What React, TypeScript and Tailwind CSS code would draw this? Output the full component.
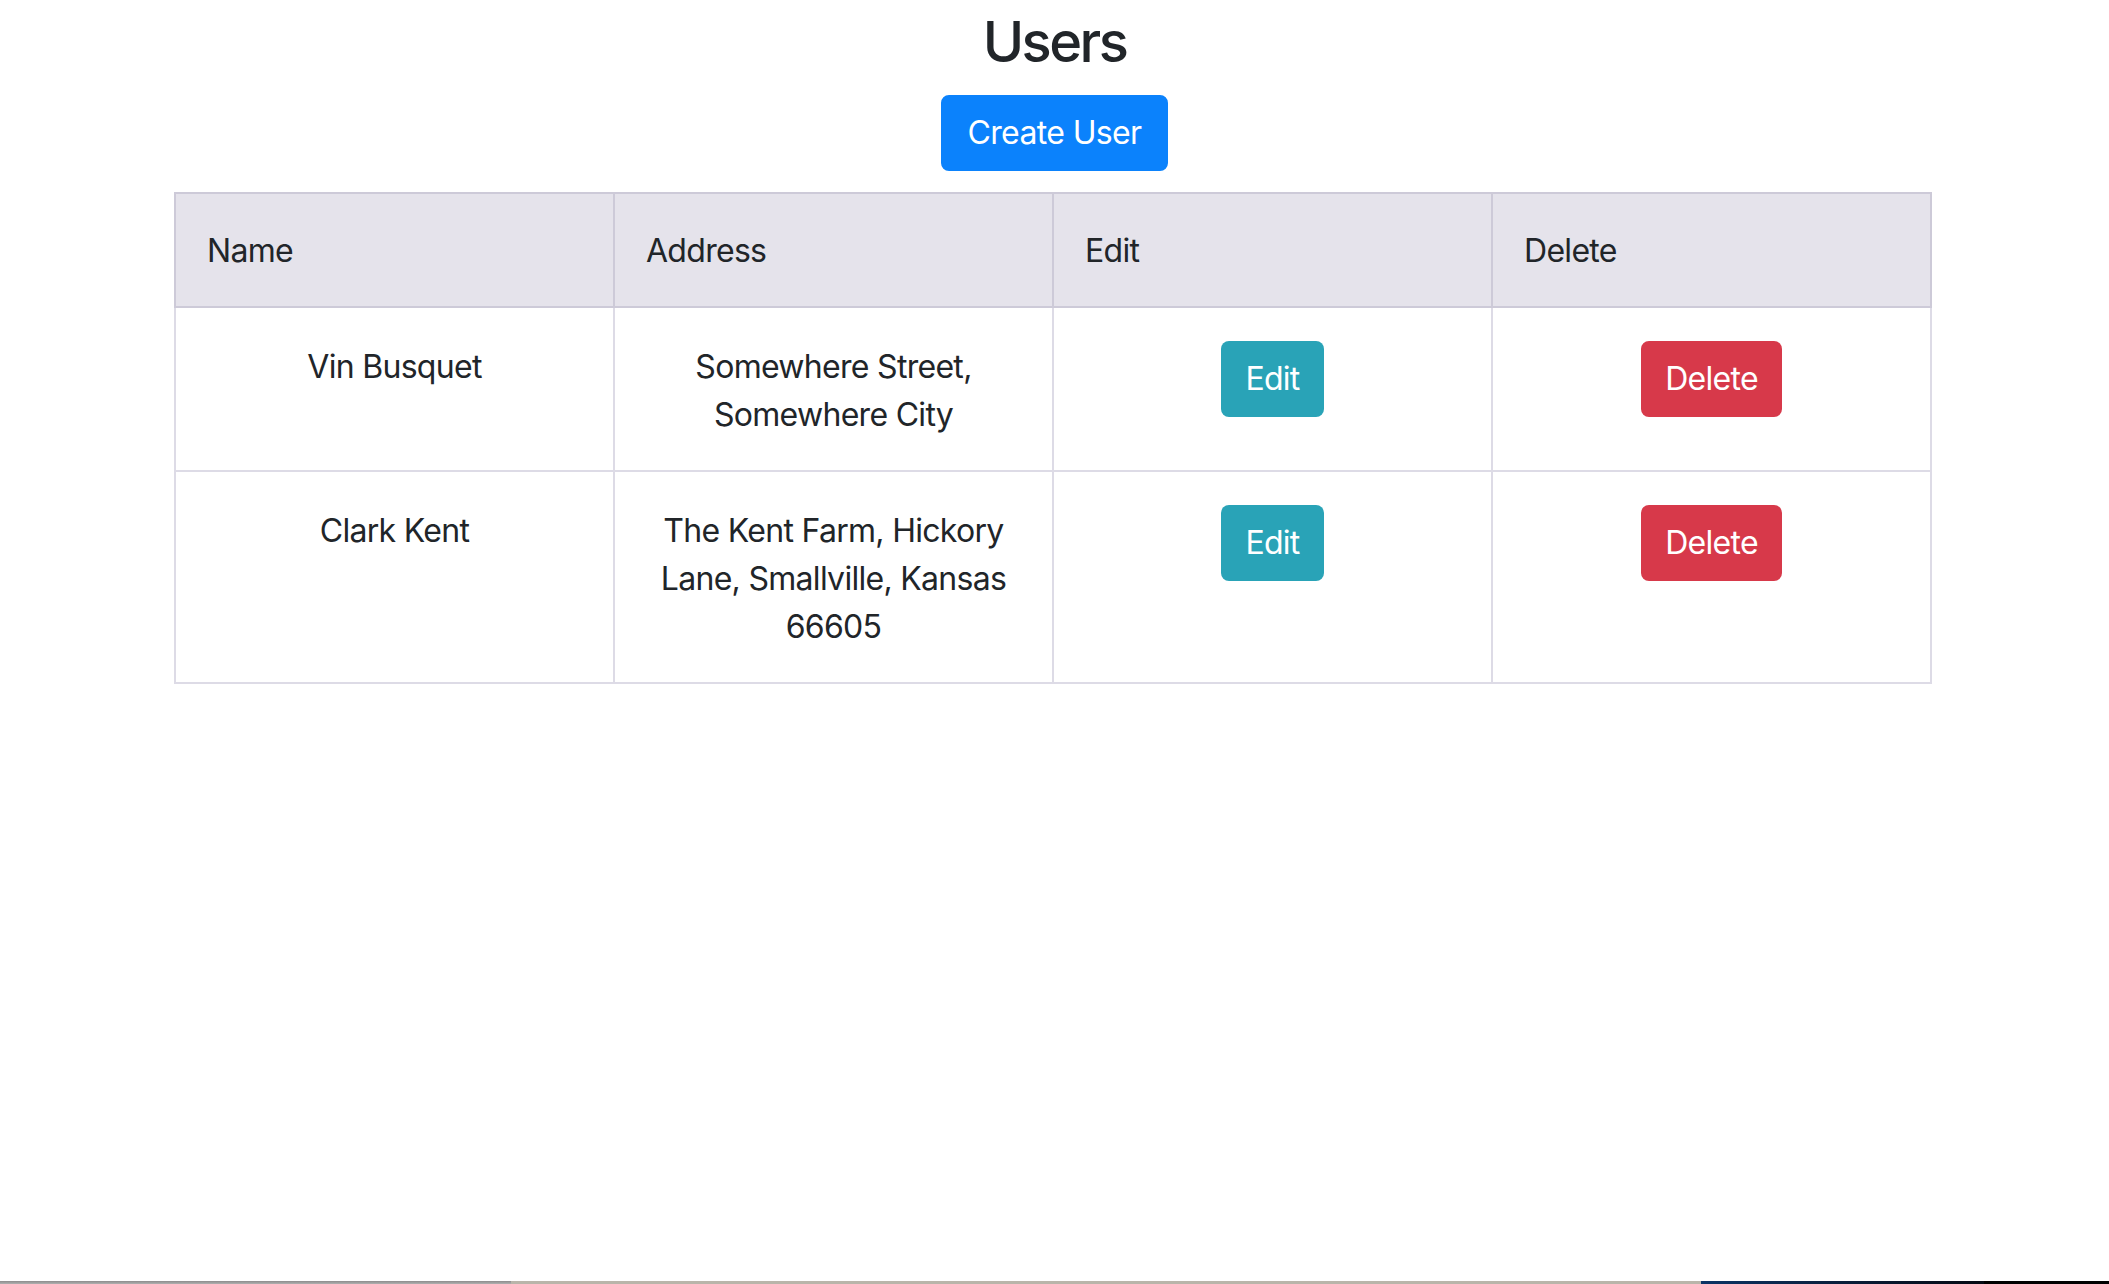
import React from "react";

const users = [
  { name: "Vin Busquet", address: "Somewhere Street, Somewhere City" },
  { name: "Clark Kent", address: "The Kent Farm, Hickory Lane, Smallville, Kansas 66605" },
];

export default function App() {
  return (
    <div
      className="min-h-screen flex flex-col bg-white text-[#212529]"
      style={{ fontFamily: "Inter, 'Noto Sans', 'Liberation Sans', sans-serif" }}
    >
      <main className="flex-1 flex flex-col items-center">
        <h3 className="pt-[9px] mb-[19px] text-[56px] leading-[67px] font-medium tracking-[-0.045em]">Users</h3>
        <button className="h-[76px] px-[24px] rounded-[8px] bg-[#0b82fc] text-white text-[32px] leading-[48px] tracking-[-0.02em] border-2 border-[#0b82fc]">
          Create User
        </button>
        <table className="mt-[21px] w-[1758px] mr-[3px] table-fixed border-collapse text-[32px] leading-[48px] tracking-[-0.022em]">
          <thead>
            <tr>
              <th className="border-2 border-[#cdcad8] bg-[#e5e3eb] text-left font-normal pl-[31px] pt-[33px] pb-[31px]">Name</th>
              <th className="border-2 border-[#cdcad8] bg-[#e5e3eb] text-left font-normal pl-[31px] pt-[33px] pb-[31px]">Address</th>
              <th className="border-2 border-[#cdcad8] bg-[#e5e3eb] text-left font-normal pl-[31px] pt-[33px] pb-[31px]">Edit</th>
              <th className="border-2 border-[#cdcad8] bg-[#e5e3eb] text-left font-normal pl-[31px] pt-[33px] pb-[31px]">Delete</th>
            </tr>
          </thead>
          <tbody>
            {users.map((u) => (
              <tr key={u.name}>
                <td className="border-2 border-[#dddbe6] text-center align-top px-[32px] pt-[35px] pb-[31px]">{u.name}</td>
                <td className="border-2 border-[#dddbe6] text-center align-top px-[32px] pt-[35px] pb-[31px]">{u.address}</td>
                <td className="border-2 border-[#dddbe6] text-center align-top px-[32px] pt-[33px] pb-[33px]">
                  <button className="h-[76px] px-[24px] rounded-[8px] bg-[#29a3b7] text-white text-[32px] leading-[48px]">
                    Edit
                  </button>
                </td>
                <td className="border-2 border-[#dddbe6] text-center align-top px-[32px] pt-[33px] pb-[33px]">
                  <button className="h-[76px] px-[24px] rounded-[8px] bg-[#d7394a] text-white text-[32px] leading-[48px]">
                    Delete
                  </button>
                </td>
              </tr>
            ))}
          </tbody>
        </table>
      </main>
      <div className="h-[3px] flex">
        <div className="w-[511px] bg-gradient-to-b from-[#8c8c8c] to-[#b0b0b0]" />
        <div className="w-[1190px] bg-[#b9b5aa]" />
        <div className="w-[283px] bg-gradient-to-r from-[#0b3466] to-[#050a14]" />
        <div className="flex-1 bg-black" />
      </div>
    </div>
  );
}
